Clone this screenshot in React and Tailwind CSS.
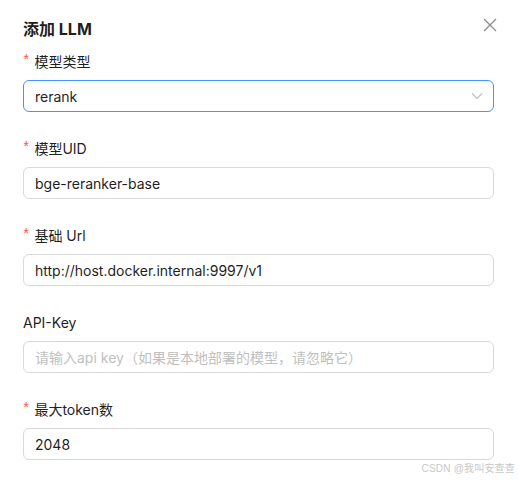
const fields = [
  { label: "模型UID", required: true, value: "bge-reranker-base" },
  { label: "基础 Url", required: true, value: "http://host.docker.internal:9997/v1" },
  {
    label: "API-Key",
    required: false,
    placeholder: "请输入api key（如果是本地部署的模型，请忽略它）",
  },
  { label: "最大token数", required: true, value: "2048" },
];

function Label({ text, required }) {
  return (
    <div className="flex items-center h-[22px] mb-2 text-[14px] text-[#1f1f1f]">
      {required && (
        <span className="text-[#ff4d4f] mr-[4px] ml-[-1px] text-[14px] leading-none font-['Liberation_Mono',monospace]">
          *
        </span>
      )}
      <span>{text}</span>
    </div>
  );
}

export default function App() {
  return (
    <div className="w-[519px] h-[482px] bg-white relative overflow-hidden font-['Inter','Noto_Sans_CJK_SC',sans-serif]">
      <div className="pl-[23px] pr-[25px] pt-[18px]">
        <div className="flex items-center justify-between h-[22px] mb-[10px]">
          <h1 className="text-[16px] font-bold text-[#1f1f1f]">添加 LLM</h1>
          <svg width="14" height="14" viewBox="0 0 14 14" className="mr-[-3px] mt-[-8px]">
            <path d="M1 1L13 13M13 1L1 13" stroke="#8c8c8c" strokeWidth="1.3" />
          </svg>
        </div>

        <Label text="模型类型" required />
        <div className="flex items-center justify-between h-8 mb-[25px] border border-[#4096ff] rounded-md pl-[11px] pr-[10px] text-[14px] text-[#1f1f1f]">
          <span>rerank</span>
          <svg width="12" height="8" viewBox="0 0 12 8">
            <path d="M1 1.5L6 6.5L11 1.5" fill="none" stroke="#bfbfbf" strokeWidth="1.2" />
          </svg>
        </div>

        {fields.map((f, i) => (
          <div key={f.label} className={i === 3 ? "mb-0" : "mb-[25px]"}>
            <Label text={f.label} required={f.required} />
            <div className="flex items-center h-8 border border-[#d9d9d9] rounded-md px-[11px] text-[14px]">
              {f.value ? (
                <span className="text-[#1f1f1f]">{f.value}</span>
              ) : (
                <span className="text-[#bfbfbf]">{f.placeholder}</span>
              )}
            </div>
          </div>
        ))}
      </div>
      <div className="absolute right-[4px] bottom-[6px] text-[10px] tracking-[0.2px] text-[#c8c8c8] font-['Liberation_Sans','Noto_Sans_CJK_SC',sans-serif]">
        CSDN @我叫安查查
      </div>
    </div>
  );
}
